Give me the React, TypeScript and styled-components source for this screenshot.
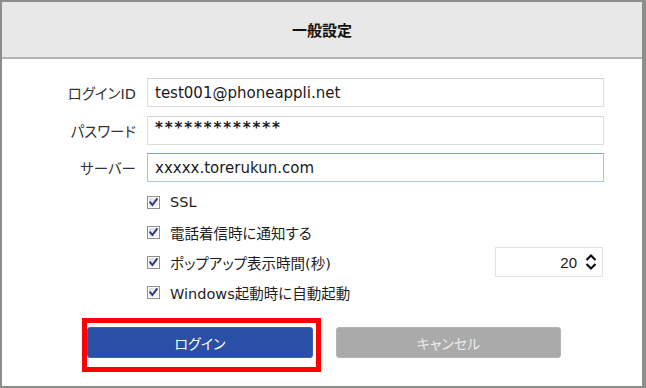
import styled, { createGlobalStyle } from "styled-components";

const GlobalStyle = createGlobalStyle`
  body {
    margin: 0;
    background: #ffffff;
  }
`;

const FONT = `"DejaVu Sans", "Noto Sans CJK JP", sans-serif`;

const App = () => {
  return (
    <>
      <GlobalStyle />
      <Frame>
        <Header>一般設定</Header>
        <Body>
          <Form>
            <Label>ログインID</Label>
            <Input>test001@phoneappli.net</Input>
            <Label>パスワード</Label>
            <Input $secret>*************</Input>
            <Label>サーバー</Label>
            <Input $focused>xxxxx.torerukun.com</Input>
            <Options>
              <Option>
                <CheckBox />
                <OptionText>SSL</OptionText>
              </Option>
              <Option>
                <CheckBox />
                <OptionText>電話着信時に通知する</OptionText>
              </Option>
              <Option>
                <CheckBox />
                <OptionText>ポップアップ表示時間(秒)</OptionText>
                <Spinner>
                  <SpinValue>20</SpinValue>
                  <SpinArrows />
                </Spinner>
              </Option>
              <Option>
                <CheckBox />
                <OptionText>Windows起動時に自動起動</OptionText>
              </Option>
            </Options>
          </Form>
          <Actions>
            <Highlight>
              <Button $primary>ログイン</Button>
            </Highlight>
            <Button>キャンセル</Button>
          </Actions>
        </Body>
      </Frame>
    </>
  );
};

export default App;

const CheckBox = () => (
  <CheckIcon width="13" height="13" viewBox="0 0 13 13">
    <defs>
      <linearGradient id="cbg" x1="0" y1="0" x2="1" y2="1">
        <stop offset="0" stopColor="#dcdcdc" />
        <stop offset="1" stopColor="#f8f8f8" />
      </linearGradient>
    </defs>
    <rect x="0.5" y="0.5" width="12" height="12" fill="#ffffff" stroke="#8e8f8f" />
    <rect x="2" y="2" width="9" height="9" fill="url(#cbg)" />
    <path d="M3.2 6.4 L5.4 9 L9.8 3.2" fill="none" stroke="#2d3386" strokeWidth="1.9" strokeLinecap="square" />
  </CheckIcon>
);

const SpinArrows = () => (
  <svg width="12" height="18" viewBox="0 0 12 18">
    <path d="M1.5 7 L6 2.5 L10.5 7" fill="none" stroke="#111" strokeWidth="2.2" />
    <path d="M1.5 11 L6 15.5 L10.5 11" fill="none" stroke="#111" strokeWidth="2.2" />
  </svg>
);

const Frame = styled.div`
  width: 646px;
  height: 388px;
  box-sizing: border-box;
  border: 2px solid #8c8e8c;
  border-right-width: 4px;
  display: flex;
  flex-direction: column;
  background: #ffffff;
  font-family: ${FONT};
  font-feature-settings: "palt";
  color: #1e1e1e;
`;

const Header = styled.div`
  height: 55px;
  flex: none;
  background: #e8e8e8;
  border-bottom: 2px solid #b5b5b5;
  display: flex;
  align-items: center;
  justify-content: center;
  font-size: 15px;
  font-weight: 700;
  color: #111;
`;

const Body = styled.div`
  padding-top: 19px;
  display: flex;
  flex-direction: column;
`;

const Form = styled.div`
  display: grid;
  grid-template-columns: 134px 457px;
  column-gap: 11px;
  row-gap: 8.5px;
  grid-auto-rows: auto;
`;

const Label = styled.div`
  height: 29px;
  display: flex;
  align-items: center;
  justify-content: flex-end;
  font-size: 14.5px;
  color: #333;
`;

const Input = styled.div<{ $focused?: boolean; $secret?: boolean }>`
  height: 29px;
  box-sizing: border-box;
  border: 1px solid ${(p) => (p.$focused ? "#a9c6e8" : "#dcdcdc")};
  border-top-color: ${(p) => (p.$focused ? "#7ea3cf" : "#d2d2d2")};
  padding: ${(p) => (p.$secret ? "0 0 5px 7px" : "0 0 0 7px")};
  display: flex;
  align-items: center;
  font-size: 15px;
  font-weight: ${(p) => (p.$secret ? 700 : 400)};
  letter-spacing: ${(p) => (p.$secret ? "1.9px" : "0")};
  color: #1a1a1a;
`;

const Options = styled.div`
  grid-column: 2;
  margin-top: -3.5px;
  display: flex;
  flex-direction: column;
`;

const Option = styled.div`
  height: 30px;
  display: flex;
  align-items: center;
  gap: 10px;
`;

const CheckIcon = styled.svg`
  flex: none;
`;

const OptionText = styled.span`
  font-size: 14.5px;
  color: #1e1e1e;
`;

const Spinner = styled.div`
  margin-left: auto;
  margin-right: 1px;
  width: 108px;
  height: 30px;
  box-sizing: border-box;
  border: 1px solid #dfe2e6;
  display: flex;
  align-items: center;
  justify-content: flex-end;
  gap: 8px;
  padding-right: 5px;
`;

const SpinValue = styled.span`
  font-family: "Liberation Sans", sans-serif;
  font-size: 15px;
  color: #1a1a1a;
`;

const Actions = styled.div`
  margin-top: 11px;
  padding-left: 80px;
  display: flex;
  align-items: flex-start;
  gap: 15px;
`;

const Highlight = styled.div`
  border: 5px solid #ff0000;
  padding: 4px 3px 9px 0;
`;

const Button = styled.div<{ $primary?: boolean }>`
  width: ${(p) => (p.$primary ? "226px" : "225px")};
  height: 31px;
  margin-top: ${(p) => (p.$primary ? "0" : "9px")};
  box-sizing: border-box;
  border-radius: 3px;
  border: 1px solid ${(p) => (p.$primary ? "#3a5fb5" : "#b4b4b4")};
  background: ${(p) => (p.$primary ? "#2a4fa6" : "#aaaaaa")};
  color: ${(p) => (p.$primary ? "#ffffff" : "#ececec")};
  font-size: 14px;
  display: flex;
  align-items: center;
  justify-content: center;
`;
